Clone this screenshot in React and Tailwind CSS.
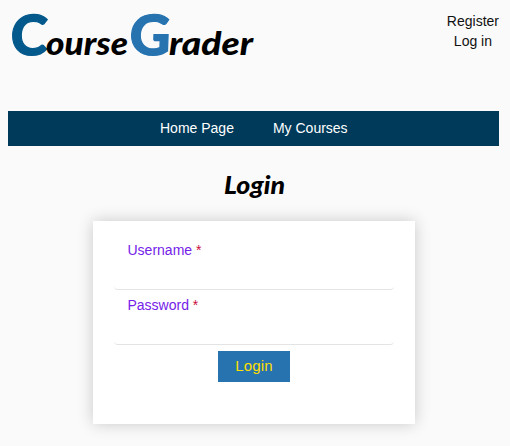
const sans = "font-['Liberation_Sans',Arial,sans-serif]";

function Logo() {
  return (
    <svg width="270" height="70" viewBox="0 0 270 70" className="block font-['Lato',sans-serif] font-black" aria-label="CourseGrader">
      <text transform="translate(10 54.5) skewX(-2)" fontSize="55.5" textLength="37" lengthAdjust="spacingAndGlyphs" fill="#04598c" stroke="#04598c" strokeWidth="1.2">C</text>
      <text x="46" y="55" fontSize="32" textLength="82" lengthAdjust="spacingAndGlyphs" className="italic">ourse</text>
      <text transform="translate(129 54.5) skewX(-2)" fontSize="55.5" textLength="41" lengthAdjust="spacingAndGlyphs" fill="#2673b0" stroke="#2673b0" strokeWidth="1.2">G</text>
      <text x="169" y="55" fontSize="33" textLength="84" lengthAdjust="spacingAndGlyphs" className="italic">rader</text>
    </svg>
  );
}

function Field({ label }) {
  return (
    <div className="h-[55px] rounded border-b border-[#e4e4e4] px-[13.5px] pt-[5px] text-[14px] leading-5 text-[#7422e8]">
      {label} <span className="text-[#c90e3c]">*</span>
    </div>
  );
}

export default function App() {
  return (
    <div className={`h-[446px] w-[510px] overflow-hidden bg-[#fafafa] text-[14px] text-[#111] ${sans}`}>
      <header className="flex h-[111px] items-start justify-between pr-[11px]">
        <Logo />
        <div className="flex flex-col items-center pt-[11px] leading-5">
          <a>Register</a>
          <a>Log in</a>
        </div>
      </header>
      <nav className="ml-2 mr-[11px] flex h-[35px] items-center gap-[39px] bg-[#003a5a] pl-[152px] text-white">
        <a>Home Page</a>
        <a>My Courses</a>
      </nav>
      <h1 className="flex h-[75px] justify-center pt-[20px]">
        <svg width="90" height="44" viewBox="0 0 90 44" className="font-['Lato',sans-serif] font-black italic">
          <text x="14" y="28" fontSize="25" textLength="61" lengthAdjust="spacingAndGlyphs" fill="#000">Login</text>
        </svg>
      </h1>
      <form className="ml-[93px] h-[203px] w-[322px] bg-white px-[21px] pt-[14px] shadow-[0_0_15px_rgba(0,0,0,0.2)]">
        <Field label="Username" />
        <Field label="Password" />
        <button type="button" className="mx-auto mt-[6px] block h-[31px] w-[72px] bg-[#2673b0] text-[15px] tracking-[0.2px] text-[#ffdf00]">Login</button>
      </form>
    </div>
  );
}
